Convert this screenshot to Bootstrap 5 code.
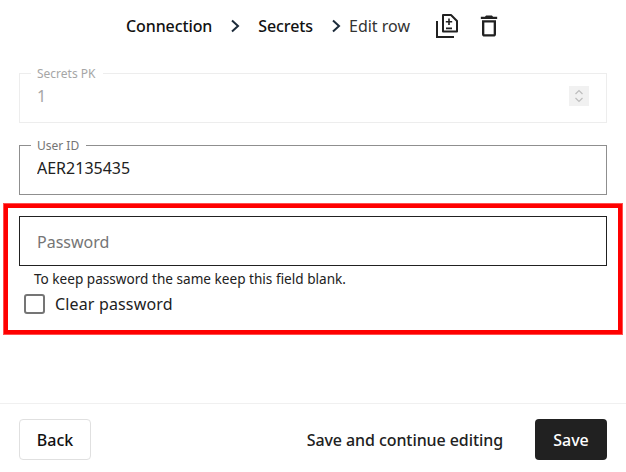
<!DOCTYPE html>
<html lang="en">
<head>
    <meta charset="UTF-8">
    <meta name="viewport" content="width=device-width, initial-scale=1.0">
    <title>Edit row</title>
    <link rel="stylesheet" href="https://cdn.jsdelivr.net/npm/bootstrap@5.3.0/dist/css/bootstrap.min.css">
    <script defer src="https://cdn.jsdelivr.net/npm/bootstrap@5.3.0/dist/js/bootstrap.bundle.min.js"></script>
    <style>
        html, body {
            height: 100%;
        }
        body {
            font-family: "Noto Sans", sans-serif;
            font-size: 16px;
            color: #212121;
            overflow: hidden;
        }
        .crumbs {
            height: 53px;
            padding-left: 126px;
            padding-bottom: 2px;
            color: #111;
        }
        .crumb-link {
            color: #111;
            font-weight: 500;
            letter-spacing: -.1px;
            text-decoration: none;
        }
        .crumb-current {
            color: #333;
        }
        .crumb-sep {
            display: block;
            width: 11px;
            height: 14px;
            margin-left: 18px;
            margin-right: 17px;
        }
        .crumb-sep-tight {
            margin-right: 7px;
        }
        .tool-icon {
            display: block;
            width: 28px;
            height: 28px;
            color: #212121;
        }
        .tool-first {
            margin-left: 23px;
            margin-right: 14px;
        }
        .form-area {
            padding: 13px 19px 0;
        }
        .outlined {
            border: 1px solid #8f8f8f;
            height: 57px;
            margin: 0 0 15px;
            padding: 0 17px;
            min-width: 0;
        }
        .outlined-last {
            margin-bottom: 9px;
        }
        .outlined legend {
            float: none;
            width: auto;
            margin: 0 0 0 -6px;
            padding: 2px 7px 0 6px;
            font-size: 12px;
            line-height: 1;
            color: #757575;
        }
        .outlined-off {
            border-color: #ededed;
        }
        .outlined-off legend {
            color: #a6a6a6;
        }
        .plain-input {
            border: 0;
            outline: 0;
            padding: 0;
            background: transparent;
            font-size: 16px;
            line-height: 24px;
            height: 24px;
            color: #212121;
            margin-top: 4px;
            width: 100%;
        }
        .plain-input:disabled {
            color: #a6a6a6;
        }
        .spinner-box {
            display: block;
            flex: 0 0 20px;
            width: 20px;
            height: 20px;
            margin-top: 6px;
            background: #f1f1f1;
        }
        .alert-frame {
            border: 4px solid #f00;
            box-shadow: 0 0 0 1px #ff5050;
            margin: 0 -15px;
            padding: 8px 11px 0;
            height: 130px;
        }
        .password-input {
            display: block;
            width: 100%;
            height: 50px;
            border: 1px solid #212121;
            border-radius: 0;
            padding: 2px 17px 0;
            font-size: 16px;
            outline: 0;
        }
        .password-input::placeholder {
            color: #757575;
            opacity: 1;
        }
        .help-line {
            font-size: 13.6px;
            line-height: 18px;
            margin: 4px 0 0 15px;
            color: #212121;
        }
        .clear-row {
            margin: 4px 0 0 5px;
            font-size: 16px;
            line-height: 24px;
            letter-spacing: .15px;
        }
        .clear-check {
            appearance: none;
            width: 21px;
            height: 20px;
            margin: 0 10px 0 0;
            border: 2px solid #757575;
            border-radius: 3px;
            background: #fff;
        }
        .page-footer {
            border-top: 1px solid #f0f0f0;
            height: 69px;
            margin-top: auto;
            padding: 15px 19px 0;
        }
        .btn-back {
            width: 72px;
            height: 41px;
            padding: 0;
            font-size: 16px;
            font-weight: 500;
            color: #111;
            background: #fff;
            border: 1px solid #e0e0e0;
            border-radius: 4px;
        }
        .btn-continue {
            height: 41px;
            padding: 0;
            margin-right: 32px;
            font-size: 16px;
            font-weight: 500;
            letter-spacing: -.08px;
            color: #212121;
            border: 0;
        }
        .btn-save {
            width: 72px;
            height: 41px;
            padding: 0;
            font-size: 16px;
            font-weight: 500;
            color: #fff;
            background: #212121;
            border: 0;
            border-radius: 4px;
        }
    </style>
</head>
<body>
    <div class="d-flex flex-column h-100">
        <div class="crumbs d-flex align-items-center">
            <a class="crumb-link" href="#">Connection</a>
            <svg class="crumb-sep" viewBox="0 0 11 14"><path d="M2 1.500 8 7l-6 5.500" fill="none" stroke="#1c2b3a" stroke-width="2"/></svg>
            <a class="crumb-link" href="#">Secrets</a>
            <svg class="crumb-sep crumb-sep-tight" viewBox="0 0 11 14"><path d="M2 1.500 8 7l-6 5.500" fill="none" stroke="#1c2b3a" stroke-width="2"/></svg>
            <span class="crumb-current">Edit row</span>
            <svg class="tool-icon tool-first" viewBox="0 0 28 28"><path d="M4 9v16h17" fill="none" stroke="currentColor" stroke-width="2"/><path d="M10 3h8l6 6v10.500H10z" fill="none" stroke="currentColor" stroke-width="2" stroke-linejoin="round"/><path d="M15.200 6.500h1.600v2.400h2.400v1.600h-2.400v2.400h-1.600v-2.400h-2.400V8.900h2.400zM13 15.500h6v1.700h-6z" fill="currentColor"/></svg>
            <svg class="tool-icon" viewBox="0 0 24 24"><path d="M16 9v10H8V9h8m-1.500-6h-5l-1 1H5v2h14V4h-3.500l-1-1zM18 7H6v12c0 1.100.9 2 2 2h8c1.100 0 2-.9 2-2V7z" fill="currentColor"/></svg>
        </div>
        <form class="form-area">
            <fieldset class="outlined outlined-off" disabled>
                <legend>Secrets PK</legend>
                <div class="d-flex">
                    <input class="plain-input" type="text" value="1" disabled>
                    <svg class="spinner-box" viewBox="0 0 20 20"><path d="M6.500 8 10 4.500 13.500 8M6.500 12l3.500 3.500 3.500-3.500" fill="none" stroke="#bdbdbd" stroke-width="1.200"/></svg>
                </div>
            </fieldset>
            <fieldset class="outlined outlined-last">
                <legend>User ID</legend>
                <input class="plain-input" type="text" value="AER2135435">
            </fieldset>
            <div class="alert-frame">
                <input class="password-input" type="password" placeholder="Password">
                <div class="help-line">To keep password the same keep this field blank.</div>
                <label class="clear-row d-flex align-items-center">
                    <input class="clear-check" type="checkbox">
                    <span>Clear password</span>
                </label>
            </div>
        </form>
        <div class="page-footer d-flex align-items-start">
            <button class="btn btn-back" type="button">Back</button>
            <button class="btn btn-continue ms-auto" type="button">Save and continue editing</button>
            <button class="btn btn-save" type="button">Save</button>
        </div>
    </div>
</body>
</html>
